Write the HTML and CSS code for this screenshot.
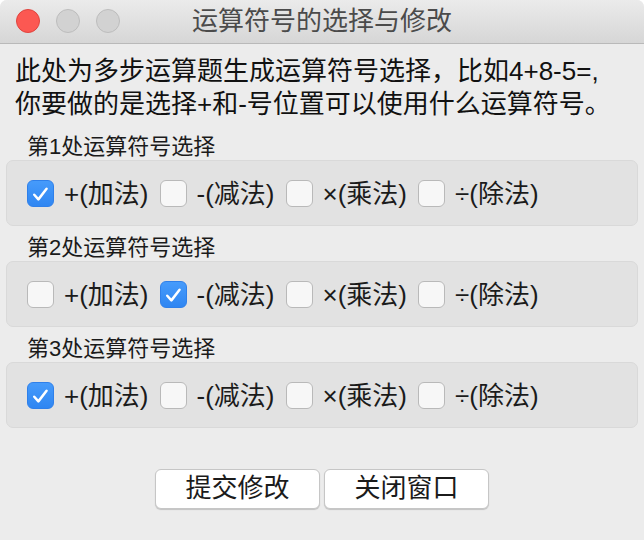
FILE: index.html
```html
<!DOCTYPE html>
<html lang="zh">
<head>
<meta charset="utf-8">
<title>运算符号的选择与修改</title>
<link rel="stylesheet" href="styles.css">
</head>
<body>
<div class="window">
  <div class="titlebar">
    <div class="lights">
      <span class="light red"></span>
      <span class="light"></span>
      <span class="light"></span>
    </div>
    <div class="title">运算符号的选择与修改</div>
    <div></div>
  </div>
  <div class="content">
    <p class="intro">此处为多步运算题生成运算符号选择，比如4+8-5=,<br>你要做的是选择+和-号位置可以使用什么运算符号。</p>

    <div class="group-label">第1处运算符号选择</div>
    <div class="group">
      <label class="opt"><span class="cb checked"><svg viewBox="0 0 26 26"><path d="M6.5 13.8 L10.8 18.6 L19.3 7.6"/></svg></span><span>+(加法)</span></label>
      <label class="opt"><span class="cb"></span><span>-(减法)</span></label>
      <label class="opt"><span class="cb"></span><span>×(乘法)</span></label>
      <label class="opt"><span class="cb"></span><span>÷(除法)</span></label>
    </div>

    <div class="group-label">第2处运算符号选择</div>
    <div class="group">
      <label class="opt"><span class="cb"></span><span>+(加法)</span></label>
      <label class="opt"><span class="cb checked"><svg viewBox="0 0 26 26"><path d="M6.5 13.8 L10.8 18.6 L19.3 7.6"/></svg></span><span>-(减法)</span></label>
      <label class="opt"><span class="cb"></span><span>×(乘法)</span></label>
      <label class="opt"><span class="cb"></span><span>÷(除法)</span></label>
    </div>

    <div class="group-label">第3处运算符号选择</div>
    <div class="group">
      <label class="opt"><span class="cb checked"><svg viewBox="0 0 26 26"><path d="M6.5 13.8 L10.8 18.6 L19.3 7.6"/></svg></span><span>+(加法)</span></label>
      <label class="opt"><span class="cb"></span><span>-(减法)</span></label>
      <label class="opt"><span class="cb"></span><span>×(乘法)</span></label>
      <label class="opt"><span class="cb"></span><span>÷(除法)</span></label>
    </div>

    <div class="buttons">
      <button class="btn">提交修改</button>
      <button class="btn">关闭窗口</button>
    </div>
  </div>
</div>
</body>
</html>
```

FILE: styles.css
```css
* { box-sizing: border-box; }

html, body {
  margin: 0;
  padding: 0;
  background: #ffffff;
}

body {
  font-family: "Liberation Sans", "Noto Sans CJK SC", sans-serif;
  color: #1b1b1b;
}

.window {
  width: 644px;
  height: 540px;
  background: #ececec;
  border-radius: 7px 7px 0 0;
  overflow: hidden;
}

.titlebar {
  height: 44px;
  display: grid;
  grid-template-columns: 1fr auto 1fr;
  align-items: center;
  background: linear-gradient(#ebebeb, #d6d6d6);
  border-bottom: 1px solid #b9b9b9;
}

.lights {
  display: flex;
  gap: 16px;
  padding-left: 16px;
  padding-bottom: 1px;
}

.light {
  width: 24px;
  height: 24px;
  border-radius: 50%;
  background: #d2d2d2;
  border: 1px solid #bdbdbd;
}

.light.red {
  background: #fc5852;
  border-color: #e0443e;
}

.title {
  font-size: 26px;
  line-height: 30px;
  color: #4b4b4b;
  padding-bottom: 2px;
}

.content {
  padding: 0 6px 0 6px;
}

.intro {
  margin: 11px 0 0 9px;
  font-size: 26px;
  line-height: 33px;
  color: #111;
}

.group-label {
  margin: 14px 0 1px 21px;
  font-size: 22px;
  line-height: 24px;
  color: #1b1b1b;
}

.group + .group-label { margin-top: 10px; }

.group {
  height: 66px;
  background: #e2e2e2;
  border: 1px solid #d9d9d9;
  border-radius: 7px;
  display: flex;
  align-items: center;
  gap: 11px;
  padding-left: 20px;
  padding-top: 1px;
}

.opt {
  display: flex;
  align-items: center;
  gap: 10px;
  font-size: 26px;
  line-height: 30px;
  color: #1b1b1b;
}

.cb {
  width: 27px;
  height: 27px;
  border-radius: 6px;
  background: #f7f7f7;
  border: 1px solid #b9b9b9;
  display: flex;
  align-items: center;
  justify-content: center;
}

.cb.checked {
  background: linear-gradient(#469bfb, #2f86f2);
  border-color: #2f80ea;
}

.cb svg {
  width: 26px;
  height: 26px;
}

.cb path {
  fill: none;
  stroke: #ffffff;
  stroke-width: 2.6;
  stroke-linecap: round;
  stroke-linejoin: round;
}

.buttons {
  display: flex;
  justify-content: center;
  gap: 4px;
  margin-top: 41px;
}

.btn {
  width: 165px;
  height: 40px;
  font-family: "Liberation Sans", "Noto Sans CJK SC", sans-serif;
  font-size: 26px;
  line-height: 30px;
  color: #1b1b1b;
  background: #ffffff;
  border: 1px solid #c6c6c6;
  border-radius: 6px;
  box-shadow: 0 1px 1px rgba(0, 0, 0, 0.18);
  padding: 0 0 2px 0;
}
```
